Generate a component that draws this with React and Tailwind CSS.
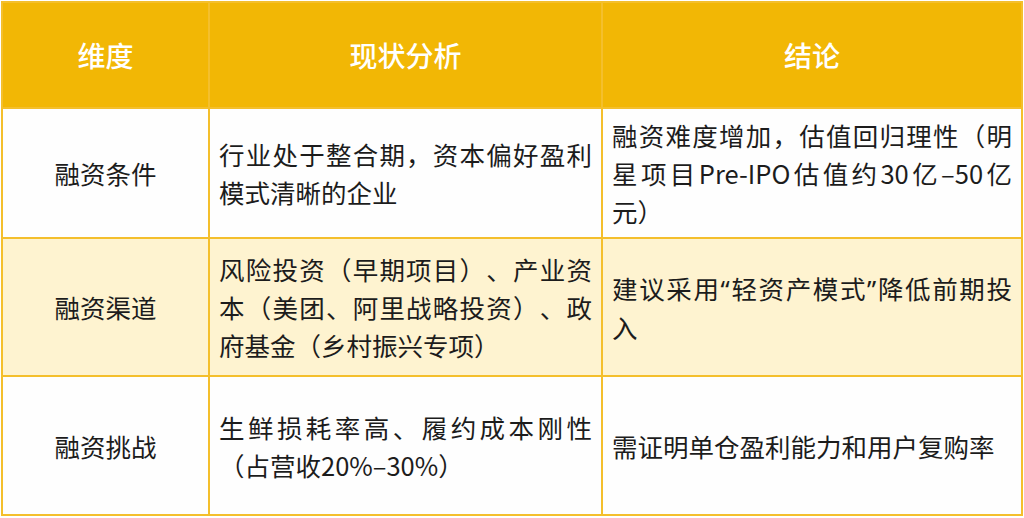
import React from "react";

const Q = ({ children }) => (
  <span style={{ fontFamily: '"Noto Sans", sans-serif' }}>{children}</span>
);

const rows = [
  {
    bg: "bg-[#fefefe]",
    a: "融资条件",
    b: "行业处于整合期，资本偏好盈利模式清晰的企业",
    c: "融资难度增加，估值回归理性（明星项目Pre-IPO估值约30亿–50亿元）",
  },
  {
    bg: "bg-[#fef3d0]",
    a: "融资渠道",
    b: "风险投资（早期项目）、产业资本（美团、阿里战略投资）、政府基金（乡村振兴专项）",
    c: (
      <>
        建议采用<Q>“</Q>轻资产模式<Q>”</Q>降低前期投入
      </>
    ),
  },
  {
    bg: "bg-[#fefefe]",
    a: "融资挑战",
    b: "生鲜损耗率高、履约成本刚性（占营收20%–30%）",
    c: "需证明单仓盈利能力和用户复购率",
  },
];

export default function App() {
  return (
    <div
      className="w-[1024px] h-[518px] bg-white pt-[1px] pl-[1px]"
      style={{ fontFamily: '"Noto Sans CJK SC", "Noto Sans", sans-serif' }}
      lang="zh-CN"
    >
      <div className="w-[1022px] grid grid-cols-[205px_391px_418px] grid-rows-[104px_128px_136px_137px] gap-[2px] p-[2px] bg-[#f4bf2c] [text-spacing-trim:space-all]">
        {["维度", "现状分析", "结论"].map((h) => (
          <div
            key={h}
            className="bg-[#f2b705] flex items-center justify-center text-white text-[28px] font-medium"
          >
            {h}
          </div>
        ))}
        {rows.map((r) => (
          <React.Fragment key={r.a}>
            <div
              className={`${r.bg} flex items-center justify-center text-[25.5px] leading-[38px] text-[#1c1c1c]`}
            >
              {r.a}
            </div>
            <div
              className={`${r.bg} flex items-center px-[9px] text-[25.5px] leading-[38px] text-[#1c1c1c]`}
            >
              <p className="text-justify w-full">{r.b}</p>
            </div>
            <div
              className={`${r.bg} flex items-center px-[9px] text-[25.5px] leading-[38px] text-[#1c1c1c]`}
            >
              <p className="text-justify w-full">{r.c}</p>
            </div>
          </React.Fragment>
        ))}
      </div>
    </div>
  );
}
